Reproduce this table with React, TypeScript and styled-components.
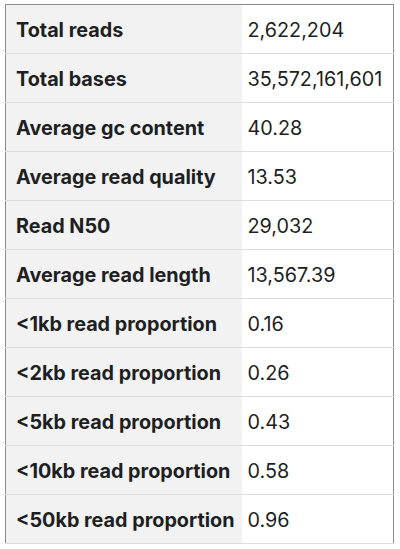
import React from 'react'
import styled, { createGlobalStyle } from 'styled-components'

const GlobalStyle = createGlobalStyle`
    html, body {
        margin: 0;
        padding: 0;
        background: #ffffff;
    }
    body {
        font-family: Inter, "Noto Sans", "Liberation Sans", sans-serif;
        color: #1d1f22;
    }
`

const Page = styled.div`
    padding: 4px 6px 0 5px;
`

const Table = styled.table`
    border-collapse: collapse;
    width: 389px;
    border-top: 1px solid #8c8c8c;
    border-left: 1px solid #8c8c8c;
    border-right: 1px solid #8c8c8c;
`

const Row = styled.tr`
    height: 49px;
    border-bottom: 1px solid #dcdcdc;
`

const Label = styled.th`
    width: 236px;
    box-sizing: border-box;
    padding: 1px 0 0 10px;
    text-align: left;
    background: #f2f2f2;
    font-size: 19.8px;
    font-weight: 700;
    white-space: nowrap;
`

const Value = styled.td`
    padding: 1px 0 0 6px;
    font-size: 19.8px;
    font-weight: 400;
    background: #ffffff;
    white-space: nowrap;
`

const rows: [string, string][] = [
    ['Total reads', '2,622,204'],
    ['Total bases', '35,572,161,601'],
    ['Average gc content', '40.28'],
    ['Average read quality', '13.53'],
    ['Read N50', '29,032'],
    ['Average read length', '13,567.39'],
    ['<1kb read proportion', '0.16'],
    ['<2kb read proportion', '0.26'],
    ['<5kb read proportion', '0.43'],
    ['<10kb read proportion', '0.58'],
    ['<50kb read proportion', '0.96'],
]

export default function App() {
    return (
        <Page>
            <GlobalStyle />
            <Table>
                <tbody>
                    {rows.map(([k, v]) => (
                        <Row key={k}>
                            <Label>{k}</Label>
                            <Value>{v}</Value>
                        </Row>
                    ))}
                </tbody>
            </Table>
        </Page>
    )
}
